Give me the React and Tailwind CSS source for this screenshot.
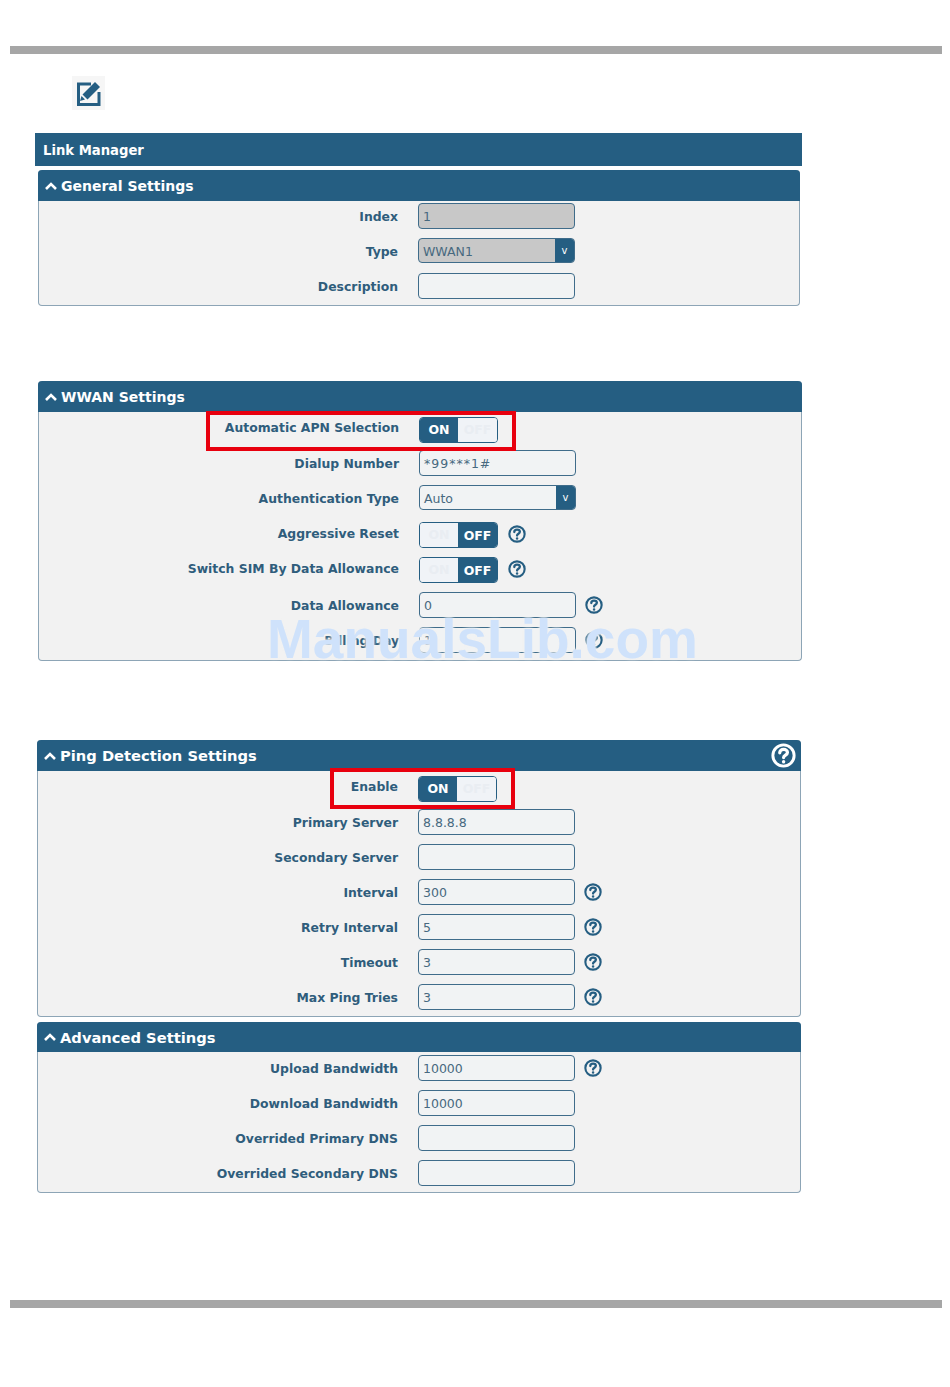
import React from 'react';

const HelpIcon = ({ size = 18, color = '#255e82' }) => (
  <svg width={size} height={size} viewBox="0 0 24 24" fill="none" stroke={color} strokeWidth="2.8" strokeLinecap="round">
    <circle cx="12" cy="12" r="10.2" />
    <path d="M8.4 9.4c0-2 1.7-3.2 3.7-3.2s3.7 1.1 3.7 2.9c0 2.5-3.7 2.5-3.7 4.9" strokeWidth="3.1" />
    <path d="M12.1 17.8v.3" strokeWidth="3.2" />
  </svg>
);

const Chevron = () => (
  <svg width="12" height="8" viewBox="0 0 12 8" fill="none" stroke="#ffffff" strokeWidth="2.6">
    <path d="M1 7l5-5 5 5" />
  </svg>
);

const EditIcon = () => (
  <div className="ml-[72px] mt-[22px] w-[33px] h-[34px] bg-[#f6f6f6] flex items-center justify-center">
    <svg width="25" height="26" viewBox="0 0 25 26">
      <path d="M15 4H2.5v20.5h20.500V12" fill="none" stroke="#255e82" strokeWidth="3" />
      <path d="M19 2l5 5-12.500 12.500-5-5z" fill="#255e82" />
      <path d="M5.500 16l3.500 3.500-5 1.500z" fill="#255e82" />
    </svg>
  </div>
);

const Input = ({ value, disabled }) => (
  <div className={`w-[157px] h-[26px] border border-[#3f6c8a] rounded-[4px] pl-1 pt-[4px] flex items-center text-[12.5px] text-[#47697f] ${disabled ? 'bg-[#c8c8c8]' : 'bg-[#f1f3f4]'}`}>
    {value}
  </div>
);

const Select = ({ value, disabled }) => (
  <div className={`w-[157px] h-[25px] border border-[#3f6c8a] rounded-[4px] pl-1 flex items-center justify-between overflow-hidden text-[12.5px] text-[#47697f] ${disabled ? 'bg-[#c8c8c8]' : 'bg-[#f1f3f4]'}`}>
    <span className="pt-[3px]">{value}</span>
    <span className="w-[19px] h-[25px] bg-[#255e82] text-white text-[10px] flex items-center justify-center">v</span>
  </div>
);

const Toggle = ({ on }) => (
  <div className="w-[79px] h-[26px] rounded-[4px] border border-[#255e82] flex overflow-hidden text-[12.5px] font-bold">
    {on ? (
      <>
        <span className="w-[38px] bg-[#255e82] text-white pt-[2px] flex items-center justify-center">ON</span>
        <span className="flex-1 bg-[#f0f3f7] rounded-l-[4px] text-[#e9edf2] pt-[2px] flex items-center justify-center">OFF</span>
      </>
    ) : (
      <>
        <span className="w-[38px] bg-[#f0f3f7] rounded-r-[4px] text-[#e9edf2] pt-[2px] flex items-center justify-center">ON</span>
        <span className="flex-1 bg-[#255e82] text-white pt-[3px] flex items-center justify-center">OFF</span>
      </>
    )}
  </div>
);

const Row = ({ label, children, help, helpClass = 'ml-[9px]', labelClass = 'pt-[4px]', className = '', labelW = 'w-[360px]' }) => (
  <div className={`h-[35px] flex items-center ${className}`}>
    <div className={`${labelW} text-right text-[12.4px] font-bold text-[#2f5d7c] whitespace-nowrap ${labelClass}`}>{label}</div>
    <div className="ml-[20px]">{children}</div>
    {help && <div className={`${helpClass} flex`}><HelpIcon /></div>}
  </div>
);

const Panel = ({ title, children, className, bodyClass = '', headerH = 'h-[31px]', titleSize = 'text-[14px]', help }) => (
  <section className={`rounded-[4px] border border-t-0 border-[#8da5b6] bg-[#f2f2f2] ${className}`}>
    <header className={`${headerH} -mx-px bg-[#255e82] rounded-t-[4px] pl-[7px] pr-[5px] flex items-center gap-[4px] text-white ${titleSize} font-bold`}>
      <Chevron />
      <span className="mt-[2px]">{title}</span>
      {help && <span className="ml-auto flex"><HelpIcon size={25} color="#ffffff" /></span>}
    </header>
    <div className={bodyClass}>{children}</div>
  </section>
);

const Rule = ({ className }) => <div className={`ml-[10px] w-[932px] h-[8px] bg-[#a6a6a6] ${className}`} />;

export default function App() {
  return (
    <div className="relative w-[950px] h-[1387px] bg-white overflow-hidden pt-[46px] font-['DejaVu_Sans','Liberation_Sans',sans-serif]">
      <Rule />
      <EditIcon />

      <h1 className="ml-[35px] mt-[23px] w-[767px] h-[33px] bg-[#255e82] pl-2 pt-[2px] flex items-center text-white text-[13.2px] font-bold">
        Link Manager
      </h1>

      <Panel title="General Settings" className="ml-[38px] mt-[4px] w-[762px] h-[136px]" bodyClass="-mt-[3px]">
        <Row label="Index" labelW="w-[359px]"><Input value="1" disabled /></Row>
        <Row label="Type" labelW="w-[359px]"><Select value="WWAN1" disabled /></Row>
        <Row label="Description" labelW="w-[359px]"><Input /></Row>
      </Panel>

      <Panel title="WWAN Settings" className="ml-[38px] mt-[75px] w-[764px] h-[280px]">
        <div className="relative">
          <Row label="Automatic APN Selection" labelClass="-mt-[2px]"><Toggle on /></Row>
          <div className="absolute left-[167px] top-[-1px] w-[310px] h-[40px] border-[4px] border-[#e8000e] pointer-events-none" />
        </div>
        <Row label="Dialup Number" className="-mt-[2px]"><Input value={<span className="tracking-[1px]">*99***1#</span>} /></Row>
        <Row label="Authentication Type"><Select value="Auto" /></Row>
        <Row label="Aggressive Reset" className="mt-[2px]" labelClass="" help helpClass="ml-[10px] -mt-[2px]"><Toggle /></Row>
        <Row label="Switch SIM By Data Allowance" labelClass="" help helpClass="ml-[10px] -mt-[2px]"><Toggle /></Row>
        <Row label="Data Allowance" help><Input value="0" /></Row>
        <Row label="Billing Day" help><Input value="1" /></Row>
      </Panel>

      <Panel title="Ping Detection Settings" titleSize="text-[14.7px]" help className="ml-[37px] mt-[79px] w-[764px] h-[277px]">
        <div className="relative">
          <Row label="Enable" labelClass="-mt-[2px]"><Toggle on /></Row>
          <div className="absolute left-[292px] top-[-3px] w-[185px] h-[41px] border-[4px] border-[#e8000e] pointer-events-none" />
        </div>
        <Row label="Primary Server" className="-mt-[2px]"><Input value="8.8.8.8" /></Row>
        <Row label="Secondary Server"><Input /></Row>
        <Row label="Interval" help><Input value="300" /></Row>
        <Row label="Retry Interval" help><Input value="5" /></Row>
        <Row label="Timeout" help><Input value="3" /></Row>
        <Row label="Max Ping Tries" help><Input value="3" /></Row>
      </Panel>

      <Panel title="Advanced Settings" titleSize="text-[14.7px]" headerH="h-[30px]" className="ml-[37px] mt-[5px] w-[764px] h-[171px]" bodyClass="-mt-[2px]">
        <Row label="Upload Bandwidth" help><Input value="10000" /></Row>
        <Row label="Download Bandwidth"><Input value="10000" /></Row>
        <Row label="Overrided Primary DNS"><Input /></Row>
        <Row label="Overrided Secondary DNS"><Input /></Row>
      </Panel>

      <Rule className="mt-[107px]" />

      {/* watermark sits over the WWAN panel */}
      <div className="absolute left-[267px] top-[604px] text-[55px] leading-[70px] font-bold text-[#cfe2fb] font-['Liberation_Sans',sans-serif] [text-shadow:0_0_3px_#f2f2f2,0_0_3px_#f2f2f2] pointer-events-none">
        ManualsLib.com
      </div>
    </div>
  );
}
